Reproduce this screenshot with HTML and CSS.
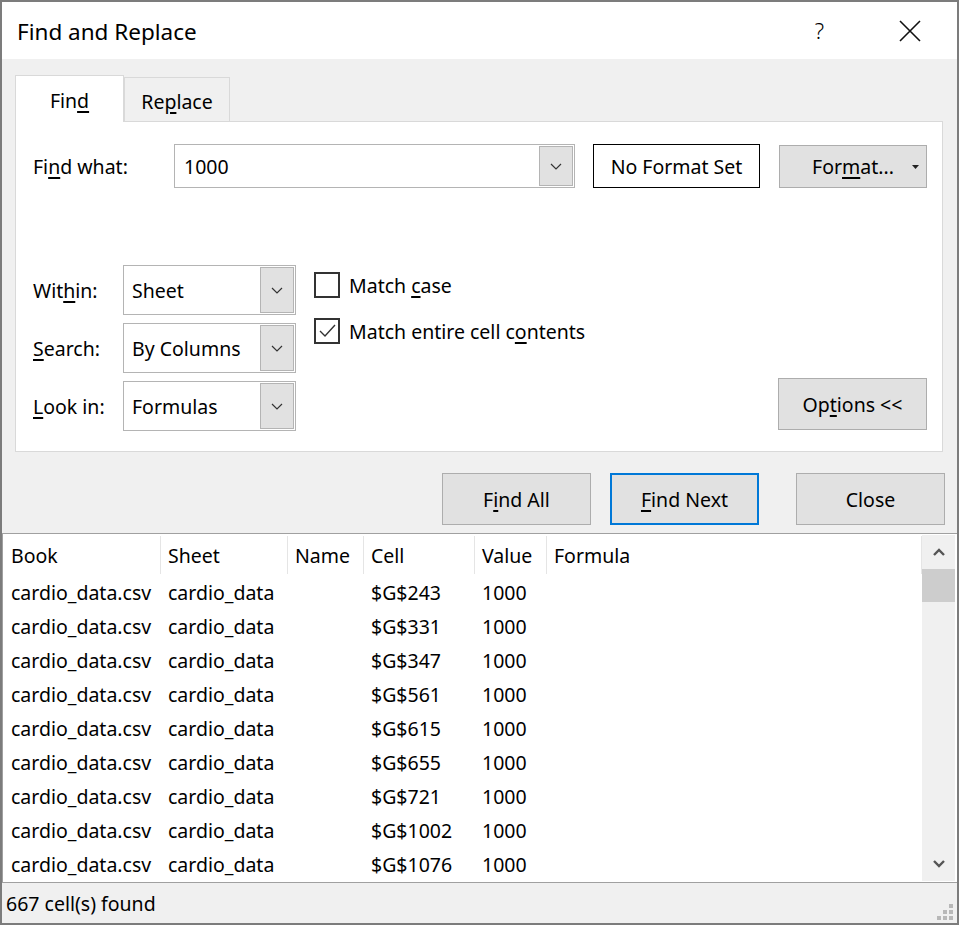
FILE: index.html
```html
<!DOCTYPE html>
<html>
<head>
<meta charset="utf-8">
<link rel="stylesheet" href="styles.css">
</head>
<body>
<div class="dialog">
  <div class="titlebar">
    <span class="title">Find and Replace</span>
    <span class="help">?</span>
    <svg class="close" width="22" height="22" viewBox="0 0 22 22"><path d="M1 1 L21 21 M21 1 L1 21" stroke="#111" stroke-width="1.6" fill="none"/></svg>
  </div>
  <div class="body">
    <div class="tabs">
      <div class="tab active">Fin<u>d</u></div>
      <div class="tab">Re<u>p</u>lace</div>
    </div>
    <div class="panel">
      <div class="findrow">
        <label class="lbl findlbl">Fi<u>n</u>d what:</label>
        <div class="combo findcombo">
          <span class="val">1000</span>
          <span class="drop"><svg width="12" height="7" viewBox="0 0 12 7"><path d="M1 1 L6 6 L11 1" stroke="#333" stroke-width="1.2" fill="none"/></svg></span>
        </div>
        <div class="noformat">No Format Set</div>
        <div class="btn formatbtn"><span>For<u>m</u>at...</span><svg class="caret" width="7" height="4" viewBox="0 0 7 4"><path d="M0 0 L7 0 L3.5 4 Z" fill="#222"/></svg></div>
      </div>
      <div class="lower">
        <div class="selects">
          <label class="lbl">Wit<u>h</u>in:</label>
          <div class="combo sel"><span class="val">Sheet</span><span class="drop"><svg width="12" height="7" viewBox="0 0 12 7"><path d="M1 1 L6 6 L11 1" stroke="#333" stroke-width="1.2" fill="none"/></svg></span></div>
          <label class="lbl"><u>S</u>earch:</label>
          <div class="combo sel"><span class="val">By Columns</span><span class="drop"><svg width="12" height="7" viewBox="0 0 12 7"><path d="M1 1 L6 6 L11 1" stroke="#333" stroke-width="1.2" fill="none"/></svg></span></div>
          <label class="lbl"><u>L</u>ook in:</label>
          <div class="combo sel"><span class="val">Formulas</span><span class="drop"><svg width="12" height="7" viewBox="0 0 12 7"><path d="M1 1 L6 6 L11 1" stroke="#333" stroke-width="1.2" fill="none"/></svg></span></div>
        </div>
        <div class="checks">
          <div class="check"><span class="box"></span><span>Match <u>c</u>ase</span></div>
          <div class="check"><span class="box"><svg width="22" height="22" viewBox="0 0 22 22"><path d="M4 11 L9 16 L19 5" stroke="#333" stroke-width="1.4" fill="none"/></svg></span><span>Match entire cell c<u>o</u>ntents</span></div>
        </div>
        <div class="btn optbtn">Op<u>t</u>ions &lt;&lt;</div>
      </div>
    </div>
    <div class="actions">
      <div class="btn abtn">F<u>i</u>nd All</div>
      <div class="btn abtn default"><u>F</u>ind Next</div>
      <div class="btn abtn closebtn">Close</div>
    </div>
  </div>
  <div class="results">
    <div class="grid">
      <div class="row head">
        <div class="c c1">Book</div><div class="c c2">Sheet</div><div class="c c3">Name</div><div class="c c4">Cell</div><div class="c c5">Value</div><div class="c c6">Formula</div>
      </div>
      <div class="row"><div class="c c1">cardio_data.csv</div><div class="c c2">cardio_data</div><div class="c c3"></div><div class="c c4">$G$243</div><div class="c c5">1000</div><div class="c c6"></div></div>
      <div class="row"><div class="c c1">cardio_data.csv</div><div class="c c2">cardio_data</div><div class="c c3"></div><div class="c c4">$G$331</div><div class="c c5">1000</div><div class="c c6"></div></div>
      <div class="row"><div class="c c1">cardio_data.csv</div><div class="c c2">cardio_data</div><div class="c c3"></div><div class="c c4">$G$347</div><div class="c c5">1000</div><div class="c c6"></div></div>
      <div class="row"><div class="c c1">cardio_data.csv</div><div class="c c2">cardio_data</div><div class="c c3"></div><div class="c c4">$G$561</div><div class="c c5">1000</div><div class="c c6"></div></div>
      <div class="row"><div class="c c1">cardio_data.csv</div><div class="c c2">cardio_data</div><div class="c c3"></div><div class="c c4">$G$615</div><div class="c c5">1000</div><div class="c c6"></div></div>
      <div class="row"><div class="c c1">cardio_data.csv</div><div class="c c2">cardio_data</div><div class="c c3"></div><div class="c c4">$G$655</div><div class="c c5">1000</div><div class="c c6"></div></div>
      <div class="row"><div class="c c1">cardio_data.csv</div><div class="c c2">cardio_data</div><div class="c c3"></div><div class="c c4">$G$721</div><div class="c c5">1000</div><div class="c c6"></div></div>
      <div class="row"><div class="c c1">cardio_data.csv</div><div class="c c2">cardio_data</div><div class="c c3"></div><div class="c c4">$G$1002</div><div class="c c5">1000</div><div class="c c6"></div></div>
      <div class="row"><div class="c c1">cardio_data.csv</div><div class="c c2">cardio_data</div><div class="c c3"></div><div class="c c4">$G$1076</div><div class="c c5">1000</div><div class="c c6"></div></div>
    </div>
    <div class="scrollbar">
      <div class="arrow"><svg width="12" height="8" viewBox="0 0 12 8"><path d="M1 7 L6 2 L11 7" stroke="#555" stroke-width="2.4" fill="none"/></svg></div>
      <div class="thumb"></div>
      <div class="track"></div>
      <div class="arrow"><svg width="12" height="8" viewBox="0 0 12 8"><path d="M1 1 L6 6 L11 1" stroke="#555" stroke-width="2.4" fill="none"/></svg></div>
    </div>
  </div>
  <div class="status">
    <span>667 cell(s) found</span>
    <svg class="grip" width="18" height="18" viewBox="0 0 18 18">
      <rect x="12" y="0" width="4" height="4" fill="#b8b8b8"/>
      <rect x="6" y="6" width="4" height="4" fill="#b8b8b8"/>
      <rect x="12" y="6" width="4" height="4" fill="#b8b8b8"/>
      <rect x="0" y="12" width="4" height="4" fill="#b8b8b8"/>
      <rect x="6" y="12" width="4" height="4" fill="#b8b8b8"/>
      <rect x="12" y="12" width="4" height="4" fill="#b8b8b8"/>
    </svg>
  </div>
</div>
</body>
</html>
```
FILE: styles.css
```css
* { box-sizing: border-box; }
html, body { margin: 0; padding: 0; background: #ffffff; }
body {
  font-family: "Noto Sans", "Open Sans", sans-serif;
  font-size: 19.5px;
  color: #000;
}
u { text-decoration: underline; text-underline-offset: 3px; text-decoration-thickness: 2px; }

.dialog {
  width: 959px;
  height: 925px;
  border: 2px solid #7c7c7c;
  background: #f0f0f0;
  display: flex;
  flex-direction: column;
}

.titlebar {
  height: 57px;
  flex: none;
  background: #fff;
  display: flex;
  align-items: center;
  padding-left: 15px;
}
.title { font-size: 22.5px; margin-top: 2px; }
.help { margin-left: auto; font-size: 22px; font-weight: 300; margin-top: -2px; margin-right: 75px; }
.close { margin-right: 36px; margin-top: 0; }

.body {
  height: 474px;
  flex: none;
  padding: 16px 12px 0 13px;
}

.tabs { display: flex; align-items: flex-end; height: 46px; }
.tab {
  display: flex; align-items: center; justify-content: center;
  border: 1px solid #d9d9d9; border-bottom: none;
  background: #f0f0f0;
}
.tab.active {
  width: 109px; height: 47px; background: #fff;
  position: relative; z-index: 1; margin-bottom: -1px;
  padding-top: 3px;
}
.tab:not(.active) { width: 106px; height: 44px; padding-top: 4px; }

.panel {
  width: 928px;
  height: 331px;
  background: #fff;
  border: 1px solid #d9d9d9;
  padding: 22px 15px 0 17px;
}

.lbl { display: flex; align-items: center; }
.findrow { display: flex; align-items: flex-start; height: 44px; }
.findlbl { width: 141px; height: 44px; }

.combo {
  border: 1px solid #b4b4b4;
  background: #fff;
  display: flex; align-items: stretch;
  padding: 1px;
}
.combo .val { flex: 1; display: flex; align-items: center; padding-left: 7px; }
.combo .drop {
  width: 34px; background: #e1e1e1; border: 1px solid #b4b4b4;
  display: flex; align-items: center; justify-content: center;
}
.findcombo { width: 401px; height: 44px; }
.findcombo .val { padding-left: 8px; }

.noformat {
  width: 167px; height: 44px; margin-left: 18px;
  border: 1px solid #000;
  display: flex; align-items: center; justify-content: center;
}

.btn {
  background: #e1e1e1; border: 1px solid #adadad;
  display: flex; align-items: center; justify-content: center;
}
.formatbtn { width: 148px; height: 43px; margin-left: 19px; margin-top: 1px; position: relative; }
.formatbtn .caret { position: absolute; right: 7px; top: 19px; }

.lower { display: flex; align-items: flex-start; margin-top: 77px; height: 166px; }
.selects {
  display: grid;
  grid-template-columns: 90px 173px;
  grid-auto-rows: 50px;
  row-gap: 8px;
}
.sel { height: 50px; }
.sel .val { padding-left: 7px; }

.checks { margin-left: 18px; margin-top: 7px; display: flex; flex-direction: column; gap: 20px; }
.check { display: flex; align-items: center; height: 26px; gap: 9px; }
.check .box {
  width: 26px; height: 26px; border: 2px solid #333; background: #fff;
  display: flex; align-items: center; justify-content: center;
}

.optbtn { width: 149px; height: 52px; margin-left: auto; margin-top: 113px; }

.actions {
  display: flex; justify-content: flex-end; margin-top: 21px;
}
.abtn { width: 149px; height: 52px; }
.abtn.default { border: 2px solid #0078d7; margin-left: 19px; }
.closebtn { margin-left: 37px; }

.results {
  height: 349px;
  flex: none;
  background: #fff;
  border-top: 1px solid #a0a0a0;
  border-left: 1px solid #a0a0a0;
  display: flex;
  padding-right: 2px;
}
.grid { flex: 1; }
.row { display: flex; height: 34px; align-items: center; }
.row.head { height: 41px; padding-top: 1px; align-items: stretch; }
.row.head .c { display: flex; align-items: center; border-right: 1px solid #e5e5e5; margin: 1px 0 1px; }
.row.head .c6 { border-right: 1px solid #e5e5e5; }
.c { padding-left: 7px; white-space: nowrap; }
.c1 { width: 158px; padding-left: 8px; }
.c2 { width: 127px; }
.c3 { width: 76px; }
.c4 { width: 111px; }
.c5 { width: 72px; }
.c6 { flex: 1; }

.scrollbar {
  width: 33px; background: #f0f0f0;
  display: flex; flex-direction: column;
  margin-top: 1px; margin-bottom: 1px;
}
.arrow { height: 34px; display: flex; align-items: center; justify-content: center; }
.thumb { height: 33px; background: #cdcdcd; }
.track { flex: 1; }

.status {
  flex: 1;
  border-top: 1px solid #a0a0a0;
  display: flex; align-items: center;
  padding-left: 4px;
  position: relative;
}
.grip { position: absolute; right: 2px; bottom: 1px; }
```
